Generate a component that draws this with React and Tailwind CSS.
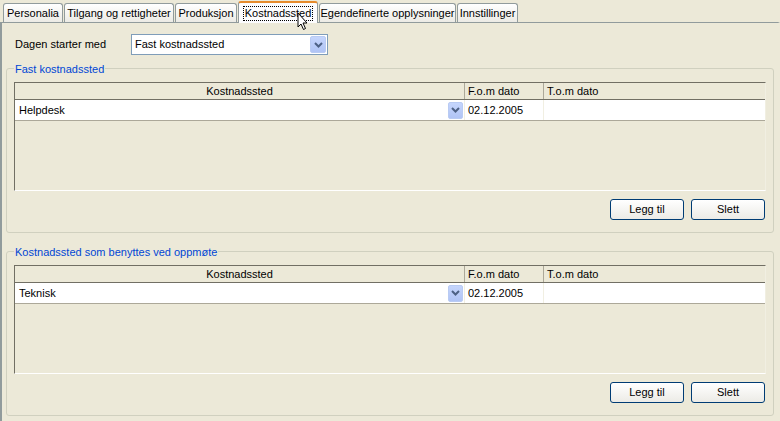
import React from 'react'

const tabs = [
  { label: 'Personalia', w: 'w-[60px]' },
  { label: 'Tilgang og rettigheter', w: 'w-[110px]' },
  { label: 'Produksjon', w: 'w-[62px]' },
  { label: 'Kostnadssted', w: 'w-[80px]', active: true },
  { label: 'Egendefinerte opplysninger', w: 'w-[137px]' },
  { label: 'Innstillinger', w: 'w-[61px]' },
]

const Chevron = () => (
  <svg width="9" height="6" viewBox="0 0 9 6">
    <path d="M1 1 L4.5 4.5 L8 1" fill="none" stroke="#4D6185" strokeWidth="2" />
  </svg>
)

const DropButton = ({ className }) => (
  <div
    className={`flex items-center justify-center rounded-[2px] border border-[#B9CBF3] bg-gradient-to-b from-[#C5D5FC] to-[#B0C4F5] ${className}`}
  >
    <Chevron />
  </div>
)

const Grid = ({ value }) => (
  <div className="h-[109px] border border-t-[#716F64] border-l-[#716F64] border-r-[#F1EFE2] border-b-white">
    <div className="flex h-[17px] border-b border-[#716F64] bg-[#ECE9D8] text-[11px]">
      <div className="flex w-[450px] items-center justify-center border-r border-[#ACA899]">
        Kostnadssted
      </div>
      <div className="flex w-[79px] items-center border-r border-[#ACA899] pl-[3px]">F.o.m dato</div>
      <div className="flex flex-1 items-center pl-[3px]">T.o.m dato</div>
    </div>
    <div className="flex h-[21px] border-b border-[#ACA899] bg-white text-[11px]">
      <div className="flex w-[450px] items-center justify-between border-r border-[#F1EFE2] pl-[4px] pr-[1px]">
        <span>{value}</span>
        <DropButton className="h-[17px] w-[15px]" />
      </div>
      <div className="flex w-[79px] items-center border-r border-[#F1EFE2] pl-[3px]">02.12.2005</div>
      <div className="flex-1" />
    </div>
  </div>
)

const XpButton = ({ children }) => (
  <button className="h-[21px] w-[74px] rounded-[3px] border border-[#003C74] bg-gradient-to-b from-white to-[#ECEBE6] text-[11px] text-black">
    {children}
  </button>
)

const GroupBox = ({ title, value, className }) => (
  <div className={`relative mx-[4px] rounded-[3px] border border-[#D0D0BF] px-[7px] pt-[13px] pb-[12px] ${className}`}>
    <span className="absolute -top-[8px] left-[7px] bg-[#ECE9D8] px-[1px] text-[11px] text-[#0046D5]">
      {title}
    </span>
    <Grid value={value} />
    <div className="mt-[8px] flex justify-end gap-[7px] pr-[1px]">
      <XpButton>Legg til</XpButton>
      <XpButton>Slett</XpButton>
    </div>
  </div>
)

const App = () => {
  return (
    <div
      className="h-[421px] w-[780px] overflow-hidden bg-[#ECE9D8] text-black"
      style={{ fontFamily: '"Liberation Sans", Arial, sans-serif' }}
    >
      {/* Tabs */}
      <div className="flex h-[22px] items-end gap-[1px] pl-[3px]">
        {tabs.map((t) =>
          t.active ? (
            <div
              key={t.label}
              className={`relative -mb-px flex h-[22px] items-center justify-center rounded-t-[3px] border border-b-0 border-[#919B9C] border-t-2 border-t-[#E68B2C] bg-[#FCFCFE] text-[11px] ${t.w}`}
            >
              <span className="border border-dotted border-black px-[1px] leading-[13px]">{t.label}</span>
              <svg className="absolute left-[58px] top-[9px]" width="12" height="19" viewBox="0 0 12 19">
                <path d="M1 1 L1 15 L4 12 L6.5 17.5 L8.5 16.5 L6 11 L10 11 Z" fill="white" stroke="black" strokeWidth="1" />
              </svg>
            </div>
          ) : (
            <div
              key={t.label}
              className={`flex h-[19px] items-center justify-center rounded-t-[3px] border border-b-0 border-[#919B9C] bg-gradient-to-b from-white to-[#ECEBE5] text-[11px] ${t.w}`}
            >
              {t.label}
            </div>
          ),
        )}
      </div>

      {/* Panel */}
      <div className="h-[399px] border-t border-l-2 border-r-2 border-[#919B9C] border-r-[#ECE9D8] bg-[#ECE9D8]">
        <div className="flex h-[34px] items-center pl-[13px] pt-[9px]">
          <span className="w-[116px] text-[11px]">Dagen starter med</span>
          <div className="flex h-[21px] w-[197px] items-center justify-between border border-[#7F9DB9] bg-white pl-[3px] pr-[1px] text-[11px]">
            <span>Fast kostnadssted</span>
            <DropButton className="h-[17px] w-[16px]" />
          </div>
        </div>

        <GroupBox title="Fast kostnadssted" value="Helpdesk" className="mt-[11px]" />
        <GroupBox title="Kostnadssted som benyttes ved oppmøte" value="Teknisk" className="mt-[18px]" />
      </div>
    </div>
  )
}

export default App
